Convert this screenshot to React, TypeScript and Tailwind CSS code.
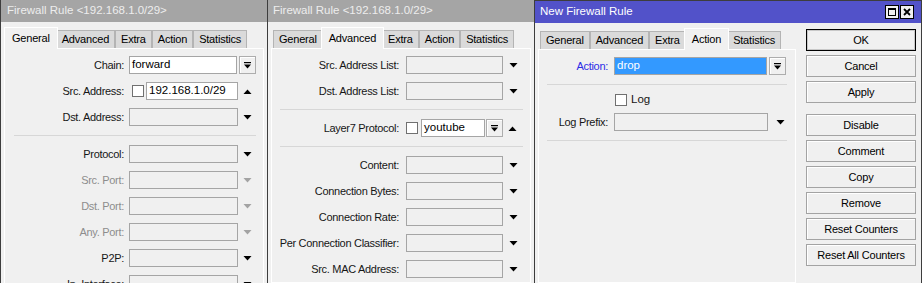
import React from 'react';

type Geo = {
  label: string;
  gap: string;
  field: string;
  selField: string;
  chkField: string;
  chkSelField: string;
  arrow: string;
  sep: string;
};

// column widths per window (label column, field, arrow spacing)
const g1: Geo = { label: 'w-[119px]', gap: 'ml-[5px]', field: 'w-[109px]', selField: 'w-[108px]', chkField: 'w-[92px]', chkSelField: 'w-[76px]', arrow: 'ml-[5px]', sep: 'ml-[9px] mr-[7px]' };
const g2: Geo = { label: 'w-[127px]', gap: 'ml-[7px]', field: 'w-[97px]', selField: 'w-[96px]', chkField: 'w-[80px]', chkSelField: 'w-[64px]', arrow: 'ml-[6px]', sep: 'ml-[8px] mr-[7px]' };
const g3: Geo = { label: 'w-[69px]', gap: 'ml-[6px]', field: 'w-[154px]', selField: 'w-[153px]', chkField: 'w-[138px]', chkSelField: 'w-[122px]', arrow: 'ml-[8px]', sep: 'ml-[8px] mr-[8px]' };

const TABS = ['General', 'Advanced', 'Extra', 'Action', 'Statistics'];

function Tri({ up = false, dim = false }: { up?: boolean; dim?: boolean }) {
  return (
    <svg width="9" height="5" viewBox="0 0 9 5" className="shrink-0">
      <path d={up ? 'M0.5 5H8.5L4.5 0.5Z' : 'M0.5 0H8.5L4.5 4.5Z'} fill={dim ? '#a3a3a3' : '#000'} />
    </svg>
  );
}

function DropBtn() {
  return (
    <div className="w-[17px] h-[18px] shrink-0 border border-[#adadad] bg-[#f0f0f0] shadow-[inset_1px_1px_0_#fff] flex items-center justify-center">
      <svg width="7" height="7" viewBox="0 0 7 7">
        <rect x="0" y="0" width="7" height="1.2" fill="#000" />
        <path d="M0 2.5H7L3.5 6.5Z" fill="#000" />
      </svg>
    </div>
  );
}

function Check({ className = '' }: { className?: string }) {
  return <div className={`w-[12px] h-[12px] shrink-0 border border-[#707070] bg-white ${className}`} />;
}

function Field({ w, value, white = false, selected = false }: { w: string; value?: string; white?: boolean; selected?: boolean }) {
  const bg = selected ? 'bg-[#3399ff] text-white' : white ? 'bg-white text-black' : 'bg-[#f0f0f0] text-black';
  return (
    <div className={`${w} h-[18px] shrink-0 border border-[#a5a5a5] ${bg} flex items-center pl-[2px] text-[11.5px] leading-none`}>
      {value}
    </div>
  );
}

function Label({ g, children, tone = 'text-[#161616]' }: { g: Geo; children: React.ReactNode; tone?: string }) {
  return (
    <div className={`${g.label} shrink-0 text-right text-[11px] leading-none tracking-[-0.3px] whitespace-nowrap ${tone}`}>
      {children}
    </div>
  );
}

type RowProps = {
  g: Geo;
  label: string;
  kind?: 'empty' | 'select' | 'check' | 'checkSelect';
  value?: string;
  dim?: boolean;
  tone?: string;
  selected?: boolean;
};

function Row({ g, label, kind = 'empty', value, dim = false, tone, selected = false }: RowProps) {
  return (
    <div className="flex items-center h-[26px]">
      <Label g={g} tone={tone ?? (dim ? 'text-[#8d8d8d]' : 'text-[#161616]')}>
        {label}
      </Label>
      <div className={`${g.gap} flex items-center`}>
        {kind === 'empty' && (
          <>
            <Field w={g.field} />
            <div className={g.arrow}>
              <Tri dim={dim} />
            </div>
          </>
        )}
        {kind === 'select' && (
          <>
            <Field w={g.selField} value={value} white selected={selected} />
            <div className="ml-[2px]">
              <DropBtn />
            </div>
          </>
        )}
        {kind === 'check' && (
          <>
            <Check className="ml-[3px]" />
            <div className="ml-[2px]">
              <Field w={g.chkField} value={value} white />
            </div>
            <div className={g.arrow}>
              <Tri up />
            </div>
          </>
        )}
        {kind === 'checkSelect' && (
          <>
            <Check />
            <div className="ml-[3px]">
              <Field w={g.chkSelField} value={value} white />
            </div>
            <div className="ml-[1px]">
              <DropBtn />
            </div>
            <div className="ml-[5px]">
              <Tri up />
            </div>
          </>
        )}
      </div>
    </div>
  );
}

function Sep({ g }: { g: Geo }) {
  return (
    <div className="h-[11px] flex items-center">
      <div className={`h-px flex-1 bg-[#d7d7d7] ${g.sep}`} />
    </div>
  );
}

function Tabs({ active }: { active: string }) {
  return (
    <div className="flex items-end h-[26px] pl-[2px] text-[11px] leading-none tracking-[-0.2px] text-black">
      {TABS.map((t) =>
        t === active ? (
          <div
            key={t}
            className="relative z-10 -mx-[2px] -mb-px h-[22px] px-[7px] bg-[#f0f0f0] border border-b-0 border-white flex items-center"
          >
            {t}
          </div>
        ) : (
          <div key={t} className="h-[18px] px-[5px] bg-[#dadada] border border-b-0 border-[#b4b4b4] flex items-center">
            {t}
          </div>
        )
      )}
    </div>
  );
}

function TitleBar({ title, active = false, pad }: { title: string; active?: boolean; pad: string }) {
  return (
    <div
      className={`h-[22px] shrink-0 flex items-center ${pad} text-[11.5px] leading-none whitespace-nowrap ${
        active ? 'bg-[#5252c9] text-white' : 'bg-[#a5a5a5] text-[#ededed]'
      }`}
    >
      {title}
      {active && (
        <div className="ml-auto mr-[7px] flex gap-[1px]">
          <div className="w-[14px] h-[14px] border border-black bg-[#f0f0f0] flex items-center justify-center">
            <svg width="8" height="8" viewBox="0 0 8 8">
              <rect x="0.5" y="0.5" width="7" height="7" fill="none" stroke="#000" />
              <rect x="0" y="0" width="8" height="2" fill="#000" />
            </svg>
          </div>
          <div className="w-[14px] h-[14px] border border-black bg-[#f0f0f0] flex items-center justify-center">
            <svg width="8" height="8" viewBox="0 0 8 8">
              <path d="M1 1L7 7M7 1L1 7" stroke="#000" strokeWidth="1.8" />
            </svg>
          </div>
        </div>
      )}
    </div>
  );
}

function Panel({ children, className = '' }: { children: React.ReactNode; className?: string }) {
  return <div className={`border border-white bg-[#f0f0f0] pt-[3px] ${className}`}>{children}</div>;
}

function Btn({ children, primary = false, className = '' }: { children: React.ReactNode; primary?: boolean; className?: string }) {
  return (
    <div
      className={`h-[22px] flex items-center justify-center text-[11px] leading-none tracking-[-0.2px] text-black bg-[#f0f0f0] border ${
        primary ? 'border-black shadow-[inset_0_0_0_1px_#c8c8c8]' : 'border-[#a3a3a3] shadow-[inset_1px_1px_0_#fff]'
      } ${className}`}
    >
      {children}
    </div>
  );
}

export default function App() {
  return (
    <div className="w-[922px] h-[283px] overflow-hidden flex bg-[#f0f0f0] font-['Liberation_Sans',Arial,sans-serif]">
      {/* Firewall Rule - General */}
      <div className="w-[268px] h-full shrink-0 flex flex-col border-x border-[#3d3d3d]">
        <TitleBar title="Firewall Rule <192.168.1.0/29>" pad="pl-[6px]" />
        <div className="flex-1 flex flex-col pl-[3px] pr-[3px]">
          <Tabs active="General" />
          <Panel className="flex-1">
            <Row g={g1} label="Chain:" kind="select" value="forward" />
            <Row g={g1} label="Src. Address:" kind="check" value="192.168.1.0/29" />
            <Row g={g1} label="Dst. Address:" />
            <Sep g={g1} />
            <Row g={g1} label="Protocol:" />
            <Row g={g1} label="Src. Port:" dim />
            <Row g={g1} label="Dst. Port:" dim />
            <Row g={g1} label="Any. Port:" dim />
            <Row g={g1} label="P2P:" />
            <Row g={g1} label="In. Interface:" />
          </Panel>
        </div>
      </div>

      {/* Firewall Rule - Advanced */}
      <div className="w-[267px] h-full shrink-0 flex flex-col border-r border-[#3d3d3d]">
        <TitleBar title="Firewall Rule <192.168.1.0/29>" pad="pl-[5px]" />
        <div className="flex-1 flex flex-col pl-[3px] pr-[3px]">
          <Tabs active="Advanced" />
          <Panel className="flex-1">
            <Row g={g2} label="Src. Address List:" />
            <Row g={g2} label="Dst. Address List:" />
            <Sep g={g2} />
            <Row g={g2} label="Layer7 Protocol:" kind="checkSelect" value="youtube" />
            <Sep g={g2} />
            <Row g={g2} label="Content:" />
            <Row g={g2} label="Connection Bytes:" />
            <Row g={g2} label="Connection Rate:" />
            <Row g={g2} label="Per Connection Classifier:" />
            <Row g={g2} label="Src. MAC Address:" />
          </Panel>
        </div>
      </div>

      {/* New Firewall Rule - Action */}
      <div className="flex-1 h-full flex flex-col border-r border-t border-[#3d3d3d]">
        <TitleBar title="New Firewall Rule" active pad="pl-[5px]" />
        <div className="flex-1 flex pl-[3px]">
          <div className="w-[258px] flex flex-col">
            <Tabs active="Action" />
            <Panel className="flex-1">
              <Row g={g3} label="Action:" kind="select" value="drop" selected tone="text-[#2b2be6]" />
              <Sep g={g3} />
              <div className="flex items-center h-[19px]">
                <div className={`${g3.label} shrink-0`} />
                <div className={`${g3.gap} flex items-center`}>
                  <Check className="ml-[1px]" />
                  <span className="ml-[4px] text-[11.5px] leading-none text-[#161616]">Log</span>
                </div>
              </div>
              <Row g={g3} label="Log Prefix:" />
              <Sep g={g3} />
            </Panel>
          </div>
          <div className="w-[110px] ml-[10px] pt-[6px] flex flex-col gap-[4px]">
            <Btn primary>OK</Btn>
            <Btn>Cancel</Btn>
            <Btn>Apply</Btn>
            <Btn className="mt-[7px]">Disable</Btn>
            <Btn>Comment</Btn>
            <Btn>Copy</Btn>
            <Btn>Remove</Btn>
            <Btn>Reset Counters</Btn>
            <Btn>Reset All Counters</Btn>
          </div>
        </div>
      </div>
    </div>
  );
}
